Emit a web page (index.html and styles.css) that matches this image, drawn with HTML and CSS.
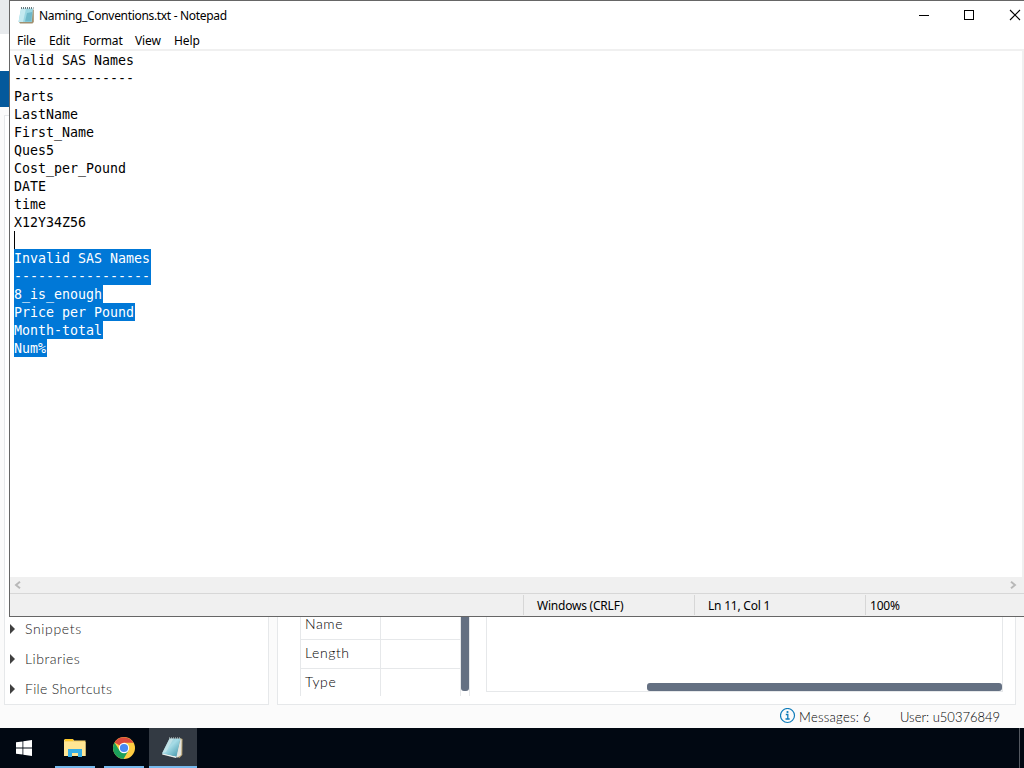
FILE: index.html
```html
<!DOCTYPE html>
<html lang="en">
<head>
  <meta charset="UTF-8">
  <meta name="viewport" content="width=device-width, initial-scale=1.0">
  <title>Naming_Conventions.txt - Notepad</title>
  <link rel="stylesheet" href="styles.css">
</head>
<body>
  <!-- SAS Studio, behind the window -->
  <div class="studio">
    <div class="browser-bar"></div>
    <div class="address-bar"></div>
    <div class="banner"></div>

    <div class="panels">
      <div class="panel sidebar">
        <div class="tree-item"><span class="arrow"></span><span class="name snippets">Snippets</span></div>
        <div class="tree-item"><span class="arrow"></span><span class="name libraries">Libraries</span></div>
        <div class="tree-item"><span class="arrow"></span><span class="name">File Shortcuts</span></div>
      </div>

      <div class="panel main">
        <div class="props">
          <div class="props-table">
            <div class="row"><div class="label">Name</div><div class="value"></div></div>
            <div class="row"><div class="label">Length</div><div class="value"></div></div>
            <div class="row"><div class="label">Type</div><div class="value"></div></div>
          </div>
          <div class="v-track"><div class="v-thumb"></div></div>
        </div>
        <div class="results"><div class="h-thumb"></div></div>
      </div>
    </div>

    <div class="footer">
      <svg class="info" width="16" height="16" viewBox="0 0 16 16">
        <circle cx="7.500" cy="7.500" r="7" fill="none" stroke="#0f7cba" stroke-width="1.2"/>
        <path d="M5.800 6.500h2v4.500M5.500 11h4.200" fill="none" stroke="#0f7cba" stroke-width="1.3"/>
        <circle cx="7.500" cy="4" r="1.1" fill="#0f7cba"/>
      </svg>
      <span class="messages">Messages: 6</span>
      <span class="user">User: u50376849</span>
    </div>
  </div>

  <!-- Notepad -->
  <div class="window">
    <div class="titlebar">
      <svg class="app-icon" width="16" height="17" viewBox="0 0 16 17">
        <path d="M14 2.500h1.800V15L14.500 16.500H2L1 15z" fill="#a09070"/>
        <path d="M3 1.500h12L13.800 15H.5z" fill="#9ad6e2"/>
        <path d="M3 1.500h5L5 15H.5z" fill="#c4e9f0"/>
        <path d="M9 6l5.200-1-.8 9.500H7z" fill="#6fb9ca"/>
        <path d="M3 1h12.500" stroke="#66787d" stroke-width="2" stroke-dasharray="1 1"/>
      </svg>
      <span class="title">Naming_Conventions.txt - Notepad</span>
      <svg class="controls" width="98" height="12" viewBox="0 0 98 12">
        <path d="M1 5.500h10" stroke="#000"/>
        <rect x="46.500" y="0.500" width="9" height="9" fill="none" stroke="#000"/>
        <path d="M92 0l10 10M102 0L92 10" stroke="#000" stroke-width="1.100"/>
      </svg>
    </div>

    <div class="menu">
      <span class="menu-file">File</span>
      <span class="menu-edit">Edit</span>
      <span class="menu-format">Format</span>
      <span class="menu-view">View</span>
      <span class="menu-help">Help</span>
    </div>

    <div class="editor">
      <div class="line">Valid SAS Names</div>
      <div class="line">---------------</div>
      <div class="line">Parts</div>
      <div class="line">LastName</div>
      <div class="line">First_Name</div>
      <div class="line">Ques5</div>
      <div class="line">Cost_per_Pound</div>
      <div class="line">DATE</div>
      <div class="line">time</div>
      <div class="line">X12Y34Z56</div>
      <div class="line caret"></div>
      <div class="line selected">Invalid SAS Names</div>
      <div class="line selected">-----------------</div>
      <div class="line selected">8_is_enough</div>
      <div class="line selected">Price per Pound</div>
      <div class="line selected">Month-total</div>
      <div class="line selected">Num%</div>
    </div>

    <div class="scrollbar">
      <svg width="8" height="8" viewBox="0 0 8 8"><path d="M6 .7L2 4l4 3.300" fill="none" stroke="#b8b8b8" stroke-width="1.900"/></svg>
      <svg width="8" height="8" viewBox="0 0 8 8"><path d="M2 .7L6 4 2 7.300" fill="none" stroke="#b8b8b8" stroke-width="1.900"/></svg>
    </div>

    <div class="statusbar">
      <div class="encoding"><span>Windows (CRLF)</span></div>
      <div class="position"><span>Ln 11, Col 1</span></div>
      <div class="zoom"><span>100%</span></div>
    </div>
  </div>

  <!-- Taskbar -->
  <div class="taskbar">
    <div class="start">
      <svg width="16" height="16" viewBox="0 0 16 16" fill="#fff">
        <path d="M0 2.300L6.500 1.400v6.200H0zM7.300 1.300L16 0v7.600H7.300zM0 8.400h6.500v6.200L0 13.700zM7.300 8.400H16V16l-8.700-1.300z"/>
      </svg>
    </div>
    <div class="task explorer">
      <svg width="22" height="18" viewBox="0 0 22 18">
        <path d="M1 0h8l1 1.500h11.500V17H0V1z" fill="#f9d978"/>
        <path d="M0 3h21.500v14H0z" fill="#ffe694"/>
        <path d="M1 0h8v2H1z" fill="#ffc928"/>
        <path d="M4 10h14v8h-4v-4H8v4H4z" fill="#36aee5"/>
      </svg>
    </div>
    <div class="task">
      <svg width="22" height="22" viewBox="0 0 22 22">
        <circle cx="11" cy="11" r="11" fill="#ffcd42"/>
        <path d="M11 11L1.500 5.500A11 11 0 0 1 20.500 5.800H11z" fill="#dc4a3d"/>
        <path d="M1.500 5.500A11 11 0 0 0 10.500 22l5-8.500L11 11l-4.500 2.600z" fill="#1ba05b"/>
        <circle cx="11" cy="11" r="5.200" fill="#fff"/>
        <circle cx="11" cy="11" r="4.100" fill="#4989f1"/>
      </svg>
    </div>
    <div class="task active">
      <svg width="24" height="22" viewBox="0 0 24 22">
        <defs>
          <linearGradient id="page" x1="0" y1="0" x2="1" y2="1">
            <stop offset="0" stop-color="#9fc3ca"/>
            <stop offset=".45" stop-color="#a5dbe6"/>
            <stop offset="1" stop-color="#3990a5"/>
          </linearGradient>
        </defs>
        <path d="M19 1l2.500 1-.2 16-3 3-3-2z" fill="#b9a474"/>
        <path d="M19.500 2l1 .5-.3 15.500-4.200 2.800L15 19z" fill="#e2e4df"/>
        <path d="M2 16l14 3.500-1 1.500L1 17.500z" fill="#eef1ee"/>
        <path d="M8.500 1.500h11L15.500 19.500 1 16.500z" fill="url(#page)"/>
        <path d="M8.500 1.500h4L5 15 1 16.500z" fill="#d4e9ec" fill-opacity=".6"/>
        <path d="M8 1h12" stroke="#cfd9d8" stroke-width="1.200" stroke-dasharray="1 1"/>
      </svg>
    </div>
    <div class="show-desktop"></div>
  </div>
</body>
</html>
```
FILE: styles.css
```css
* {
  box-sizing: border-box;
}

body {
  margin: 0;
  width: 1024px;
  height: 768px;
  overflow: hidden;
  position: relative;
  display: flex;
  flex-direction: column;
  font-family: "Noto Sans", sans-serif;
  font-size: 12px;
  color: #000;
}

svg {
  display: block;
  flex: none;
}

/* SAS Studio */
.studio {
  height: 728px;
  display: flex;
  flex-direction: column;
  background-color: #fbfbfb;
  font-family: Lato, sans-serif;
  font-size: 14px;
}

.browser-bar {
  height: 34px;
  background-color: #e7eaed;
}

.address-bar {
  height: 37px;
  background-color: #fff;
}

.banner {
  height: 36px;
  background-color: #04599c;
}

.panels {
  height: 598px;
  padding: 8px 8px 0 4px;
  display: flex;
  gap: 8px;
}

.panel {
  background-color: #fff;
  border: 1px solid #e6e8ea;
  display: flex;
}

.sidebar {
  width: 265px;
  flex-direction: column;
  justify-content: flex-end;
  color: #222;
  letter-spacing: 0.32px;
  font-weight: 300;
}

.tree-item {
  height: 30px;
  display: flex;
  align-items: center;
  padding-left: 5px;
}

.name {
  padding-bottom: 2px;
}

.snippets {
  letter-spacing: 0.65px;
}

.libraries {
  letter-spacing: 0.5px;
}

.arrow {
  border-left: 5px solid #404040;
  border-top: 5px solid transparent;
  border-bottom: 5px solid transparent;
  margin-right: 10px;
}

.main {
  width: 739px;
  align-items: flex-end;
  padding: 0 12px 0 22px;
}

.props {
  height: 120px;
  margin-bottom: 8px;
  display: flex;
  align-items: flex-end;
  color: #000;
  font-weight: 300;
  letter-spacing: 0.6px;
}

.row {
  display: flex;
  height: 29px;
  border-bottom: 1px solid #e6e8ea;
}

.row:last-child {
  height: 27px;
  border-bottom: none;
}

.label {
  width: 80px;
  padding: 4px 0 0 4px;
  line-height: 17px;
  border-left: 1px solid #e6e8ea;
}

.value {
  width: 80px;
  border-left: 1px solid #e6e8ea;
}

.v-track {
  width: 10px;
  height: 100%;
  border-left: 1px solid #e6e8ea;
  border-right: 1px solid #e6e8ea;
}

.v-thumb {
  width: 8px;
  height: 115px;
  border-radius: 3px;
  background-color: #647082;
}

.results {
  width: 517px;
  height: 200px;
  margin: 0 0 12px 16px;
  border: 1px solid #e6e8ea;
  display: flex;
  align-items: flex-end;
  justify-content: flex-end;
}

.h-thumb {
  width: 355px;
  height: 8px;
  border-radius: 3px;
  background-color: #647082;
}

.footer {
  height: 23px;
  display: flex;
  align-items: center;
  padding-left: 780px;
  font-size: 13px;
  font-weight: 300;
  white-space: nowrap;
}

.info {
  margin-bottom: 1px;
}

.messages {
  width: 102px;
  margin-left: 3px;
  letter-spacing: 0.28px;
}

.user {
  margin-left: -1px;
}

/* Notepad window */
.window {
  position: absolute;
  left: 9px;
  top: 0;
  width: 1015px;
  height: 617px;
  border: 1px solid #666;
  border-right: none;
  background-color: #fff;
  display: flex;
  flex-direction: column;
}

.titlebar {
  height: 29px;
  display: flex;
  align-items: center;
  padding-left: 8px;
}

.title {
  flex: 1;
  margin-left: 5px;
  letter-spacing: -0.32px;
}

.controls {
  margin-right: 8px;
  overflow: visible;
}

.menu {
  height: 19px;
  display: flex;
  align-items: center;
  padding: 2px 0 0 7px;
  letter-spacing: -0.1px;
}

.menu-file {
  width: 32px;
}

.menu-edit {
  width: 34px;
}

.menu-format {
  width: 52px;
  letter-spacing: -0.2px;
}

.menu-view {
  width: 39px;
}

.editor {
  height: 528px;
  border-top: 2px solid #f0f0f0;
  border-right: 2px solid #f0f0f0;
  padding-left: 4px;
  display: flex;
  flex-direction: column;
  align-items: flex-start;
  font-family: "DejaVu Sans Mono", monospace;
  font-size: 13.290px;
}

.line {
  height: 18px;
  line-height: 20px;
  white-space: pre;
}

.selected {
  background-color: #0078d7;
  color: #fff;
  padding-right: 1px;
}

.caret {
  border-left: 1px solid #000;
}

.scrollbar {
  height: 16px;
  background-color: #f0f0f0;
  display: flex;
  align-items: center;
  justify-content: space-between;
  padding: 0 7px 1px 4px;
}

.statusbar {
  height: 23px;
  border-top: 1px solid #d7d7d7;
  background-color: #f0f0f0;
  display: flex;
  justify-content: flex-end;
}

.statusbar div {
  height: 20px;
  margin-top: 1px;
  line-height: 22px;
  letter-spacing: -0.22px;
  border-left: 1px solid #d7d7d7;
}

.encoding {
  width: 171px;
  padding-left: 13px;
}

.position {
  width: 171px;
  padding-left: 13px;
}

.zoom {
  width: 159px;
  padding-left: 4px;
}

/* Taskbar */
.taskbar {
  height: 40px;
  background-color: #010812;
  display: flex;
}

.start {
  width: 48px;
  display: flex;
  align-items: center;
  justify-content: center;
}

.task {
  width: 40px;
  margin-left: 9px;
  padding-top: 2px;
  border-bottom: 2px solid #76b9ed;
  display: flex;
  align-items: center;
  justify-content: center;
}

.task.explorer {
  margin-left: 7px;
}

.task.active {
  width: 48px;
  margin-left: 5px;
  background-color: #333a43;
}

.show-desktop {
  width: 5px;
  margin-left: auto;
  border-left: 1px solid #545961;
}
```
